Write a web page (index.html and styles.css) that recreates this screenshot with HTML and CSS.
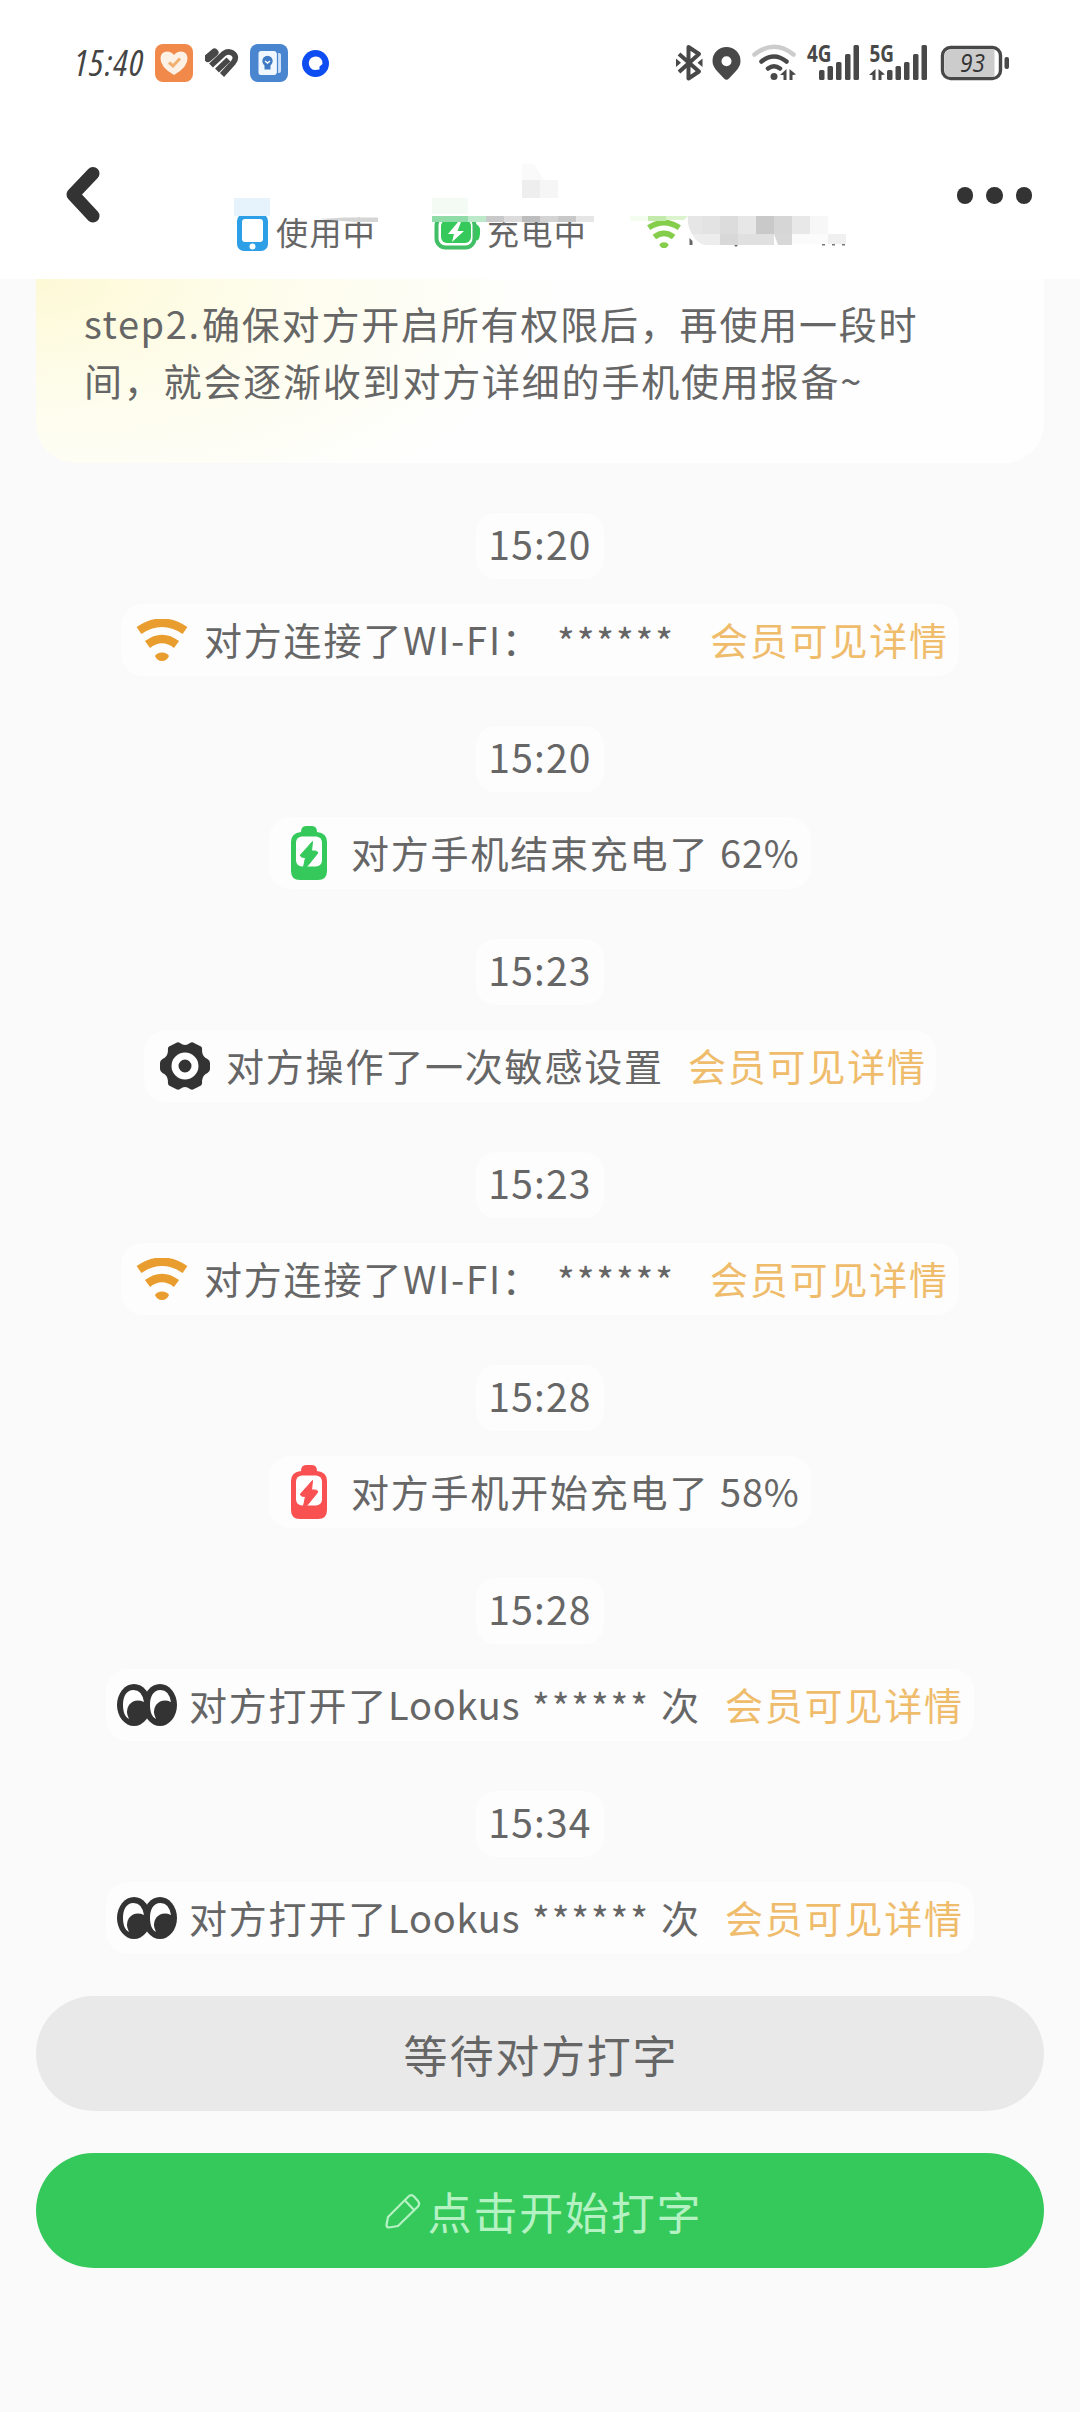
FILE: index.html
```html
<!DOCTYPE html>
<html lang="zh-CN">
<head>
<meta charset="utf-8">
<title>Lookus</title>
<link rel="stylesheet" href="styles.css">
</head>
<body>
<svg class="defs" width="0" height="0" aria-hidden="true">
  <symbol id="wifi" viewBox="0 0 52 42">
    <path d="M3 11.500Q26-4 49 11.500" fill="none" stroke="currentColor" stroke-width="8.500"/>
    <path d="M11.500 25.500Q26 14.500 40.500 25.500" fill="none" stroke="currentColor" stroke-width="8.500"/>
    <path d="M19 37Q21 33.500 26 33.500T33 37Q31 42 26 42T19 37Z" fill="currentColor"/>
  </symbol>
  <symbol id="battery" viewBox="0 0 36 54">
    <path d="M10 6Q10 0 15 0H21Q26 0 26 6Q36 7 36 16V45Q36 54 27 54H9Q0 54 0 45V16Q0 7 10 6Z" fill="currentColor"/>
    <rect x="5" y="10.500" width="26" height="30" rx="6" fill="#fff"/>
    <path d="M21.500 15.500 9.500 29Q9 31.500 14.500 31.500L12.500 41 16 40.500 26.500 27.500Q28 24.500 20.500 25Z" fill="currentColor" stroke="currentColor" stroke-width="1"/>
  </symbol>
  <symbol id="eyes" viewBox="0 0 60 42">
    <ellipse cx="17" cy="21" rx="17" ry="21" fill="#333"/>
    <ellipse cx="43" cy="21" rx="17" ry="21" fill="#333"/>
    <path d="M16.500 6C9 6 6 13 6 21C6 28 8 33 12 35Q8 27 12 21Q18 14 27 18Q25 6 16.500 6Z" fill="#fff"/>
    <path d="M43.500 6C36 6 33 13 33 21C33 28 35 33 39 35Q35 27 39 21Q45 14 54 18Q52 6 43.500 6Z" fill="#fff"/>
  </symbol>
  <symbol id="gear" viewBox="0 0 50 48">
    <path d="M16 1Q18 -.5 20 1Q25 5 30 1Q32 -.5 34 1L41 4.500Q42.500 5.500 42 9Q42.500 15 47.500 17Q50 18.500 50 21V27Q50 29.500 47.500 31Q42.500 33 42 39Q42.500 42.500 41 43.500L34 47Q32 48.500 30 47Q25 43 20 47Q18 48.500 16 47L9 43.500Q7.500 42.500 8 39Q7.500 33 2.500 31Q0 29.500 0 27V21Q0 18.500 2.500 17Q7.500 15 8 9Q7.500 5.500 9 4.500Z" fill="#333"/>
    <circle cx="25" cy="24" r="10" fill="none" stroke="#fff" stroke-width="7"/>
  </symbol>
</svg>

<header class="top">
  <div class="sysbar">
    <div class="sys-left">
      <span class="clock">15:40</span>
      <svg class="app" width="38" height="38" viewBox="0 0 38 38"><rect width="38" height="38" rx="8" fill="#f0894a"/><path d="M19 31Q5 23 5.500 14Q6 7.500 12 7.500Q16.500 7.500 19 11Q21.500 7.500 26 7.500Q32 7.500 32.500 14Q33 23 19 31Z" fill="#fdf1e6"/><path d="M14 18.500 18 22 25 14.500" fill="none" stroke="#f0b070" stroke-width="3"/></svg>
      <svg class="app heart" width="34" height="30" viewBox="0 0 34 30"><g stroke="#484848" stroke-width="5.600" fill="none"><path d="M3 10 9.500 4.500" stroke-width="8" stroke-linecap="round"/><path d="M6 17.500 19 5.500Q23 2.500 27.500 5Q33 9 28 15L17 27"/><path d="M12 22.500 23.500 11.500"/></g></svg>
      <svg class="app book" width="38" height="38" viewBox="0 0 38 38"><rect width="38" height="38" rx="8" fill="#4a86d0"/><rect x="14" y="9" width="17" height="20" rx="2" fill="#cfe2f8"/><path d="M27.500 9V29" stroke="#4a86d0" stroke-width="1.200"/><rect x="8.500" y="7" width="18" height="24" rx="2.500" fill="#f1f7fe"/><circle cx="17.500" cy="17" r="5.200" fill="#3f7bc4"/><path d="M14.500 21H20.500V25.500H14.500Z" fill="#3f7bc4"/><path d="M15 17 17.500 19 20 17" stroke="#fff" stroke-width="1.400" fill="none"/></svg>
      <svg class="app dot" width="27" height="27" viewBox="0 0 27 27"><circle cx="13.500" cy="13.500" r="13.500" fill="#0d4df2"/><path d="M14 6.500A6.500 6.500 0 0 1 20.500 14L17.500 16.500V19.500L13 20A6.700 6.700 0 0 1 14 6.500Z" fill="#fff"/></svg>
    </div>
    <svg class="sys-right" width="336" height="58" viewBox="675 34 336 58">
      <path d="M679 54 699 71.500 688.500 78.500V47L699 54 679 72" fill="none" stroke="#484848" stroke-width="4" stroke-linejoin="round"/>
      <path d="M676 58.500 681 62.800 676 67ZM702.500 58.500 697.500 62.800 702.500 67Z" fill="#484848"/>
      <path fill-rule="evenodd" d="M726.500 47A14 14 0 0 1 740.500 61Q740.500 66 736 71L729 78.500Q726.500 81 724 78.500L717 71Q712.500 66 712.500 61A14 14 0 0 1 726.500 47ZM726.500 56.200A5 5 0 1 0 726.500 66.200A5 5 0 1 0 726.500 56.200Z" fill="#484848"/>
      <g fill="none" stroke-linecap="round" stroke-width="4.500"><path d="M754.500 54.500Q774 39 793.500 54.500" stroke="#ccc"/><path d="M761.500 61.500Q774 51.500 786.500 61.500M768 68.500Q774 64 780 68.500" stroke="#484848"/></g>
      <circle cx="774" cy="76.500" r="3.500" fill="#484848"/>
      <path d="M780 75 786.500 69V80H783.500V75ZM789.500 69 796 74.500 792.500 75V80H789.500Z" fill="#484848"/>
      <g fill="#484848">
        <rect x="819" y="70" width="5.500" height="10" rx="1.500"/><rect x="827.500" y="66" width="5.500" height="14" rx="1.500"/><rect x="836" y="62" width="5.500" height="18" rx="1.500"/><rect x="845" y="54" width="5.500" height="26" rx="1.500"/><rect x="853.500" y="45" width="5.500" height="35" rx="1.500"/>
        <rect x="887" y="70" width="5.500" height="10" rx="1.500"/><rect x="895.500" y="66" width="5.500" height="14" rx="1.500"/><rect x="904" y="62" width="5.500" height="18" rx="1.500"/><rect x="913" y="54" width="5.500" height="26" rx="1.500"/><rect x="921.500" y="45" width="5.500" height="35" rx="1.500"/>
        <path d="M869 75 875.500 69V80H872.500V75ZM878.500 69 885 74.500 881.500 75V80H878.500Z"/>
      </g>
      <text x="807" y="61.500" class="net" textLength="24.500" lengthAdjust="spacingAndGlyphs">4G</text>
      <text x="869.500" y="61.500" class="net" textLength="24.500" lengthAdjust="spacingAndGlyphs">5G</text>
      <rect x="942.500" y="47.500" width="58" height="31" rx="8" fill="#fff" stroke="#484848" stroke-width="3.400"/>
      <path d="M951 49.500H994.500V76.500H951Q944.500 76.500 944.500 70V56Q944.500 49.500 951 49.500Z" fill="#ccc"/>
      <rect x="1004.500" y="57" width="4.500" height="12" rx="2" fill="#484848"/>
      <text x="960" y="72" class="charge" textLength="25" lengthAdjust="spacingAndGlyphs">93</text>
    </svg>
  </div>

  <div class="nav">
    <svg class="back" width="34" height="56" viewBox="0 0 34 56"><path d="M27 6.500 7 27.500 27 49" fill="none" stroke="#333" stroke-width="13" stroke-linecap="round" stroke-linejoin="round"/></svg>
    <div class="states">
      <div class="state using"><svg width="31" height="37" viewBox="0 0 31 37"><rect width="31" height="37" rx="7" fill="#2c9fe6"/><rect x="5" y="5" width="21" height="23" rx="3" fill="#fff"/><circle cx="15.500" cy="32.500" r="3" fill="#fff"/></svg><span>使用中</span></div>
      <div class="state charging"><svg width="47" height="36" viewBox="0 0 47 36"><rect x="2.500" y="2.500" width="38" height="31" rx="9" fill="#fff" stroke="#42be66" stroke-width="4"/><path d="M42 10Q47 12 46 20T42 26Z" fill="#35c95b"/><rect x="7" y="6" width="30" height="23" rx="6" fill="#35c95b"/><path d="M24 8 14 20H20L18 28 30 17H23.500L27 8Z" fill="#fff"/></svg><span>充电中</span></div>
      <svg class="net-on" width="36" height="28"><use href="#wifi"/></svg>
    </div>
    <div class="more"><i></i><i></i><i></i></div>
    <svg class="mosaic" width="630" height="90" viewBox="230 160 630 90">
      <path fill="#e6f3fd" d="M234 198h36v18h-36z"/>
      <path fill="#d5d5d5" d="M318 219 345 217.500H378V222H355Z"/>
      <path fill="#f4fbf5" d="M432 198h36v18h-36z"/>
      <path fill="#fafafa" d="M522 164h12l10 16h-22z"/><path fill="#eee" d="M522 180h18v18h-18z"/><path fill="#f6f6f6" d="M540 180h18v18h-18z"/>
      <path fill="#fff" d="M432 214h162v4h-162z"/>
      <path fill="#8fdca9" d="M432 216h36v6h-36z"/><path fill="#bbe9c9" d="M468 216h18v6h-18z"/><path fill="#c9c9c9" d="M486 216h18v6h-18z"/><path fill="#dcdcdc" d="M504 216h18v6h-18z"/><path fill="#bdbdbd" d="M522 216h18v6h-18z"/><path fill="#d4d4d4" d="M540 216h18v6h-18z"/><path fill="#c8c8c8" d="M558 216h18v6h-18z"/><path fill="#e6e6e6" d="M576 216h18v6h-18z"/>
      <path fill="#f5fcf0" d="M630 216h18v5h-18z"/><path fill="#c3eaab" d="M648 216h18v5h-18z"/><path fill="#dcf4cd" d="M666 216h22l-4 4h-18z"/>
      <path fill="#e6e6e6" d="M688 216h14v18h-10q-5-8-4-18z"/><path fill="#e3e3e3" d="M702 216h18v18h-18z"/><path fill="#dcdcdc" d="M720 216h18v18h-18z"/><path fill="#e7e7e7" d="M738 216h18v18h-18z"/><path fill="#c9c9c9" d="M756 216h18v18h-18z"/><path fill="#d6d6d6" d="M774 216h18v18h-18z"/><path fill="#e8e8e8" d="M792 216h18v18h-18z"/><path fill="#f7f7f7" d="M810 216h18v18h-18z"/>
      <path fill="#ededed" d="M692 234h28v11h-15q-9-2-13-11z"/><path fill="#d8d8d8" d="M720 234h18v11h-18z"/><path fill="#e0e0e0" d="M738 234h36v11h-36z"/><path fill="#d8d8d8" d="M774 234h18v11h-14z"/><path fill="#fbfbfb" d="M792 234h36v10h-36z"/><path fill="#f0f0f0" d="M828 234h18v10h-18z"/>
      <path fill="#666" d="M689.500 238l3 3v4h-3zM734 245h4l-2 2z"/>
      <path fill="#777" d="M822 244h3v1.500h-3zM832 244h3v1.500h-3zM842 244h3v1.500h-3z"/>
    </svg>
  </div>
</header>

<main class="chat">
  <section class="guide"><p><span class="step">step2.</span>确保对方开启所有权限后，再使用一段时<br>间，就会逐渐收到对方详细的手机使用报备~</p></section>

  <div class="entry"><time>15:20</time><div class="event wifi"><svg class="ico"><use href="#wifi"/></svg><span class="what">对方连接了<span class="latin">WI-FI</span>：</span><span class="stars">******</span><a>会员可见详情</a></div></div>
  <div class="entry"><time>15:20</time><div class="event power full"><svg class="ico"><use href="#battery"/></svg><span class="what">对方手机结束充电了</span><span class="pct">62%</span></div></div>
  <div class="entry"><time>15:23</time><div class="event setting"><svg class="ico"><use href="#gear"/></svg><span class="what">对方操作了一次敏感设置</span><a>会员可见详情</a></div></div>
  <div class="entry"><time>15:23</time><div class="event wifi"><svg class="ico"><use href="#wifi"/></svg><span class="what">对方连接了<span class="latin">WI-FI</span>：</span><span class="stars">******</span><a>会员可见详情</a></div></div>
  <div class="entry"><time>15:28</time><div class="event power low"><svg class="ico"><use href="#battery"/></svg><span class="what">对方手机开始充电了</span><span class="pct">58%</span></div></div>
  <div class="entry"><time>15:28</time><div class="event look"><svg class="ico"><use href="#eyes"/></svg><span class="what">对方打开了<span class="latin">Lookus</span></span><span class="stars">******</span><span class="unit">次</span><a>会员可见详情</a></div></div>
  <div class="entry"><time>15:34</time><div class="event look"><svg class="ico"><use href="#eyes"/></svg><span class="what">对方打开了<span class="latin">Lookus</span></span><span class="stars">******</span><span class="unit">次</span><a>会员可见详情</a></div></div>
</main>

<footer class="actions">
  <button class="wait">等待对方打字</button>
  <button class="start"><svg width="36" height="36" viewBox="0 0 36 36" fill="none" stroke="#b5f2c3" stroke-width="2.200" stroke-linejoin="round"><path d="M3 24 23 4Q26 0.500 29 3.500L33 8Q35.500 11 32.500 14L13 33 4 34.500Q1.500 34.500 1.500 32ZM20 7.500 29 17"/></svg><span>点击开始打字</span></button>
</footer>
</body>
</html>
```
FILE: styles.css
```css
* { box-sizing: border-box; }

body {
  margin: 0;
  width: 1080px;
  height: 2412px;
  overflow: hidden;
  background: #fafafa;
  color: #666;
  font-family: "Noto Sans CJK SC", sans-serif;
  font-size: 38px;
  letter-spacing: 1.8px;
}

svg { display: block; flex: none; }
.defs { position: absolute; }

/* header */
.top { height: 279px; background: #fff; }

.sysbar {
  display: flex;
  justify-content: space-between;
  height: 128px;
  padding: 34px 69px 0 74px;
}
.sys-left { display: flex; height: 58px; align-items: center; }
.clock {
  width: 81px;
  font: italic 400 36px/38px "Open Sans", sans-serif;
  font-stretch: 75%;
  letter-spacing: 1.6px;
  color: #444;
}
.heart { margin-left: 12px; }
.book { margin-left: 11px; }
.dot { margin-left: 14px; }
.net { font: 700 23px "Open Sans", sans-serif; letter-spacing: 0; fill: #484848; }
.charge { font: italic 400 26px "Open Sans", sans-serif; letter-spacing: 0; fill: #333; }

.nav {
  position: relative;
  display: flex;
  height: 151px;
  padding: 0 48px 0 66px;
}
.back { margin-top: 39px; }
.states {
  display: flex;
  flex: 1;
  align-items: center;
  height: 44px;
  margin: 82px 0 0 137px;
  font-size: 32px;
  letter-spacing: 1.4px;
  line-height: 40px;
}
.state { display: flex; align-items: center; gap: 8px; }
.state span { padding-bottom: 3px; }
.using { width: 197px; }
.charging { width: 212px; gap: 6px; }
.net-on { color: #84ce4b; margin-top: 4px; }
.more { display: flex; gap: 13px; padding-top: 59px; }
.more i { width: 16.5px; height: 16.5px; border-radius: 50%; background: #333; }
.mosaic { position: absolute; left: 230px; top: 32px; }

/* conversation */
.chat { display: flex; flex-direction: column; }

.guide {
  height: 184px;
  margin: 0 36px 50px;
  padding: 15px 48px 0;
  border-radius: 0 0 40px 40px;
  background: radial-gradient(ellipse 520px 260px at 0 0, #fdf9d6 0%, #fefdec 45%, #fefefe 100%);
}
.guide p { margin: 0; line-height: 57px; white-space: nowrap; }
.step { display: inline-block; width: 118px; letter-spacing: 1.6px; }

.entry {
  display: flex;
  flex-direction: column;
  align-items: center;
  gap: 25px;
  height: 213px;
}
time {
  width: 128px;
  height: 66px;
  border-radius: 20px;
  background: #fdfdfd;
  line-height: 60px;
  text-align: center;
  font-size: 39px;
  letter-spacing: 1.2px;
}
.event {
  display: flex;
  align-items: center;
  height: 72px;
  border-radius: 22px;
  background: #fdfdfd;
  line-height: 69px;
  white-space: nowrap;
}
.event span, .event a { height: 72px; }
.event a { color: #efbc6c; }
.event .stars { letter-spacing: 1.9px; line-height: 74px; }

.wifi { width: 838px; padding-left: 15px; }
.wifi .ico { width: 52px; height: 42px; margin-right: 16px; color: #e99d2e; }
.wifi .what { width: 353px; }
.wifi .stars { width: 153px; }

.power { width: 542px; padding-left: 21px; }
.power .ico { width: 38px; height: 54px; margin-right: 23px; }
.power .what { width: 369px; }
.full { color: #35c95b; }
.low { color: #f95051; }
.power span { color: #666; }
.pct { letter-spacing: .8px; }

.setting { width: 792px; padding-left: 16px; }
.setting .ico { width: 50px; height: 48px; margin-right: 16px; }
.setting .what { width: 462px; }

.look { width: 868px; padding-left: 11px; }
.look .ico { width: 60px; height: 42px; margin-right: 12px; }
.look .what { width: 343px; }
.look .latin { letter-spacing: .8px; }
.look .stars { width: 129px; }
.look .unit { width: 64px; }

/* bottom buttons */
.actions {
  display: flex;
  flex-direction: column;
  gap: 42px;
  padding: 0 36px;
  margin-top: -8px;
}
button {
  display: flex;
  align-items: center;
  justify-content: center;
  height: 115px;
  border: 0;
  border-radius: 58px;
  font: inherit;
  font-size: 44px;
  letter-spacing: 1.8px;
  padding: 0 0 0 2px;
}
.wait { background: #e9e9e9; color: #666; }
.start { background: #35c95b; color: #b5f2c3; gap: 7px; padding-left: 7px; }
```
